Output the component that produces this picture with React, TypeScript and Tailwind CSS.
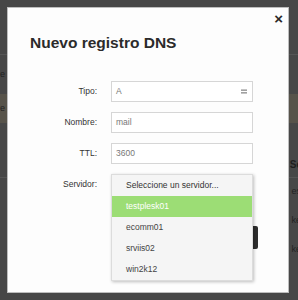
import React from "react";

const FONT = { fontFamily: '"Liberation Sans", Arial, sans-serif' };

function Row({ label, children }: { label: string; children: React.ReactNode }) {
  return (
    <div className="flex items-center h-[21px]">
      <div className="w-[89px] text-right text-[8.5px] text-[#333]">{label}</div>
      <div className="ml-[14px]">{children}</div>
    </div>
  );
}

function Input({ value }: { value: string }) {
  return (
    <div className="w-[142px] h-[21px] border border-[#d6d6d6] bg-white flex items-center pl-[4px] text-[8.5px] text-[#777]">
      {value}
    </div>
  );
}

export default function App() {
  const items = ["testplesk01", "ecomm01", "srviis02", "win2k12"];
  return (
    <div className="relative w-[298px] h-[300px] overflow-hidden bg-[#474747]" style={FONT}>
      {/* background page (dimmed) */}
      <div className="flex flex-col">
        <div className="h-[55px] border-b border-[#555]" />
        <div className="h-[39px] flex items-center justify-between text-[9px] text-[#222]">
          <span className="-ml-[3px]">re</span>
        </div>
        <div className="h-[29px] bg-[#57534a] flex items-center text-[9px] text-[#222]">
          <span className="-ml-[3px]">re</span>
        </div>
        <div className="h-[28px]" />
        <div className="h-[26px] flex justify-end items-center text-[10px] font-bold text-[#1e1e1e]">
          <span className="-mr-[4px]">Se</span>
        </div>
        <div className="border-b border-[#555]" />
        <div className="h-[28px] flex justify-end items-center text-[9px] text-[#222]"><span className="-mr-[3px]">es</span></div>
        <div className="h-[29px] flex justify-end items-center text-[9px] text-[#222]"><span className="-mr-[3px]">ke</span></div>
        <div className="h-[29px] flex justify-end items-center text-[9px] text-[#222]"><span className="-mr-[3px]">ke</span></div>
      </div>

      {/* modal */}
      <div className="absolute left-[7px] top-[7px] w-[282px] h-[286px] bg-[#fdfdfd] border border-[#bdbdbd]">
        <div className="relative">
          <div className="absolute right-[5px] top-[3px] text-[15px] font-bold text-[#2a2a2a] leading-none">×</div>
        </div>
        <div className="pt-[26px] pl-[22px] text-[15.5px] font-bold text-[#2b2b2b] leading-[18px]">
          Nuevo registro DNS
        </div>
        <div className="mt-[29px] flex flex-col gap-[10px]">
          <Row label="Tipo:">
            <div className="w-[142px] h-[21px] border border-[#d6d6d6] bg-white flex items-center justify-between pl-[4px] pr-[5px] text-[8.5px] text-[#777]">
              <span>A</span>
              <svg width="6" height="5" viewBox="0 0 6 5">
                <rect x="0" y="0.5" width="6" height="1.3" fill="#8a8a8a" />
                <rect x="0" y="3.2" width="6" height="1.3" fill="#8a8a8a" />
              </svg>
            </div>
          </Row>
          <Row label="Nombre:">
            <Input value="mail" />
          </Row>
          <Row label="TTL:">
            <Input value="3600" />
          </Row>
          <Row label="Servidor:">
            <div className="relative w-[142px] h-[21px] border border-[#d6d6d6] bg-white">
              <div className="absolute -left-[1px] -top-[1px] w-[142px] bg-[#f5f5f5] border border-[#dcdcdc] shadow-[1px_1px_3px_rgba(0,0,0,0.25)] z-10 text-[8.5px] text-[#444]">
                <div className="h-[21px] flex items-center pl-[14px] text-[#333]">Seleccione un servidor...</div>
                {items.map((it, i) => (
                  <div
                    key={it}
                    className={
                      i === 0
                        ? "h-[21px] flex items-center pl-[14px] bg-[#9cdd75] text-white"
                        : "h-[21px] flex items-center pl-[14px]"
                    }
                  >
                    {it}
                  </div>
                ))}
              </div>
            </div>
          </Row>
        </div>
        <div className="mt-[31px] flex justify-end pr-[30px]">
          <div className="w-[60px] h-[23px] rounded-[2px] bg-[#2e2e2e]" />
        </div>
      </div>
    </div>
  );
}
